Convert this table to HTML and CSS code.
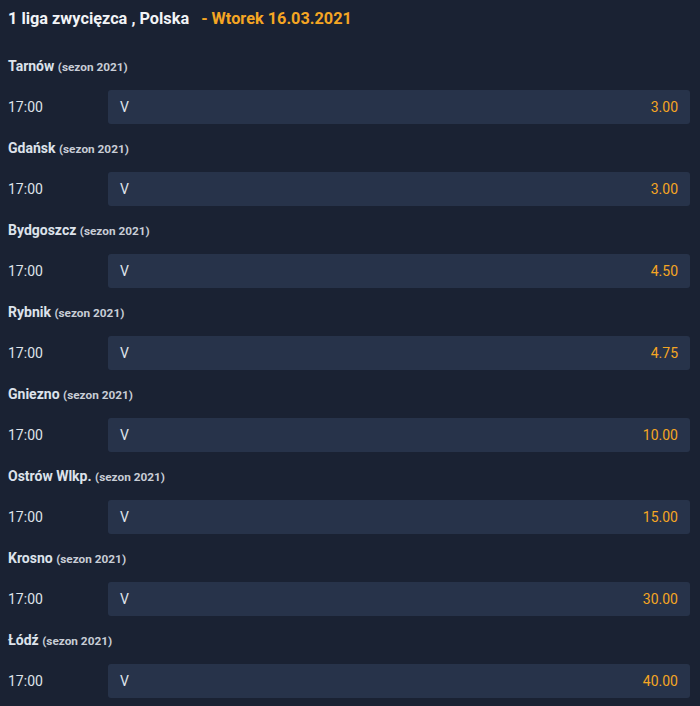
FILE: index.html
```html
<!DOCTYPE html>
<html lang="pl">
<head>
<meta charset="utf-8">
<link rel="stylesheet" href="styles.css">
</head>
<body>
<div class="page">
  <h1 class="title">1 liga zwycięzca , Polska <span class="date">- Wtorek 16.03.2021</span></h1>

  <section class="event">
    <div class="name">Tarnów <span class="season">(sezon 2021)</span></div>
    <div class="row"><span class="time">17:00</span><div class="bet"><span class="pick">V</span><span class="odd">3.00</span></div></div>
  </section>
  <section class="event">
    <div class="name">Gdańsk <span class="season">(sezon 2021)</span></div>
    <div class="row"><span class="time">17:00</span><div class="bet"><span class="pick">V</span><span class="odd">3.00</span></div></div>
  </section>
  <section class="event">
    <div class="name">Bydgoszcz <span class="season">(sezon 2021)</span></div>
    <div class="row"><span class="time">17:00</span><div class="bet"><span class="pick">V</span><span class="odd">4.50</span></div></div>
  </section>
  <section class="event">
    <div class="name">Rybnik <span class="season">(sezon 2021)</span></div>
    <div class="row"><span class="time">17:00</span><div class="bet"><span class="pick">V</span><span class="odd">4.75</span></div></div>
  </section>
  <section class="event">
    <div class="name">Gniezno <span class="season">(sezon 2021)</span></div>
    <div class="row"><span class="time">17:00</span><div class="bet"><span class="pick">V</span><span class="odd">10.00</span></div></div>
  </section>
  <section class="event">
    <div class="name">Ostrów Wlkp. <span class="season">(sezon 2021)</span></div>
    <div class="row"><span class="time">17:00</span><div class="bet"><span class="pick">V</span><span class="odd">15.00</span></div></div>
  </section>
  <section class="event">
    <div class="name">Krosno <span class="season">(sezon 2021)</span></div>
    <div class="row"><span class="time">17:00</span><div class="bet"><span class="pick">V</span><span class="odd">30.00</span></div></div>
  </section>
  <section class="event">
    <div class="name">Łódź <span class="season">(sezon 2021)</span></div>
    <div class="row"><span class="time">17:00</span><div class="bet"><span class="pick">V</span><span class="odd">40.00</span></div></div>
  </section>
</div>
</body>
</html>
```
FILE: styles.css
```css
html, body {
  margin: 0;
  padding: 0;
  background: #1a2233;
}
body {
  font-family: Roboto, "Liberation Sans", sans-serif;
  color: #e4e7ec;
}
.page {
  padding: 0 10px 0 8px;
}
.title {
  margin: 0 0 6px 0;
  height: 36px;
  font-size: 16.3px;
  font-weight: 700;
  line-height: 37px;
  color: #f2f4f7;
}
.date {
  color: #f5a623;
  margin-left: 8px;
}
.event {
  padding-top: 14px;
}
.name {
  height: 20px;
  font-size: 14px;
  font-weight: 700;
  line-height: 20px;
  color: #dde2eb;
  margin-bottom: 14px;
  white-space: nowrap;
}
.season {
  font-size: 11.8px;
  color: #c8cdd6;
}
.row {
  display: flex;
  align-items: center;
  height: 34px;
}
.time {
  width: 100px;
  font-size: 14px;
  color: #dfe3ea;
}
.bet {
  flex: 1;
  height: 34px;
  display: flex;
  align-items: center;
  justify-content: space-between;
  padding: 0 12px 0 12px;
  background: #27334a;
  border-radius: 3px;
  font-size: 14px;
}
.pick {
  color: #dfe3ea;
}
.odd {
  color: #f5a623;
}
```
